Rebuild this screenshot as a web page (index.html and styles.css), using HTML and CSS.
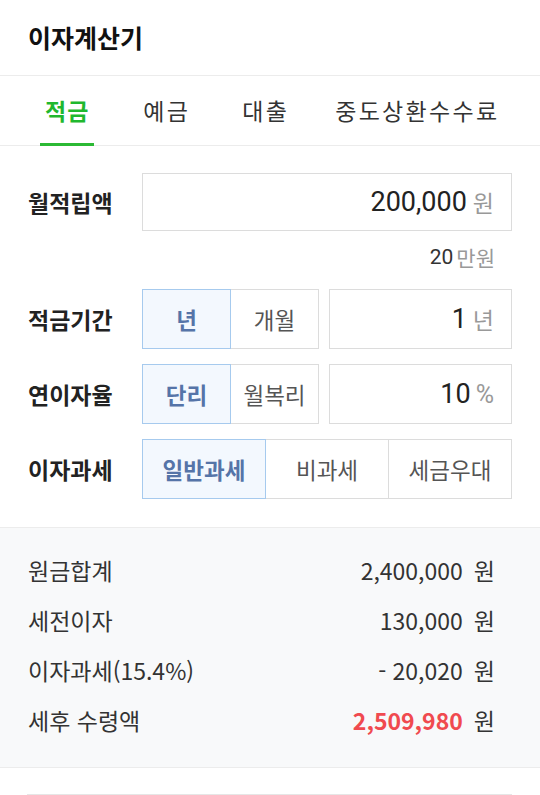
FILE: index.html
```html
<!DOCTYPE html>
<html lang="ko">
<head>
<meta charset="utf-8">
<link rel="stylesheet" href="styles.css">
</head>
<body>
<header class="header"><h1 class="title">이자계산기</h1></header>
<nav class="tabs">
  <a class="tab active">적금</a>
  <a class="tab">예금</a>
  <a class="tab">대출</a>
  <a class="tab">중도상환수수료</a>
</nav>
<section class="form">
  <div class="row">
    <div class="label">월적립액</div>
    <div class="field wide"><span class="num">200,000</span><span class="unit">원</span></div>
  </div>
  <div class="hint"><span class="hnum">20</span> <span class="hunit">만원</span></div>
  <div class="row">
    <div class="label">적금기간</div>
    <div class="seg two">
      <div class="opt on">년</div>
      <div class="opt">개월</div>
    </div>
    <div class="field"><span class="num">1</span><span class="unit">년</span></div>
  </div>
  <div class="row">
    <div class="label">연이자율</div>
    <div class="seg two">
      <div class="opt on">단리</div>
      <div class="opt">월복리</div>
    </div>
    <div class="field"><span class="num">10</span><span class="unit pct">%</span></div>
  </div>
  <div class="row">
    <div class="label">이자과세</div>
    <div class="seg three">
      <div class="opt on">일반과세</div>
      <div class="opt">비과세</div>
      <div class="opt">세금우대</div>
    </div>
  </div>
</section>
<section class="result">
  <div class="rrow"><span class="rlabel">원금합계</span><span class="rval">2,400,000</span><span class="runit">원</span></div>
  <div class="rrow"><span class="rlabel">세전이자</span><span class="rval">130,000</span><span class="runit">원</span></div>
  <div class="rrow"><span class="rlabel">이자과세(15.4%)</span><span class="rval">- 20,020</span><span class="runit">원</span></div>
  <div class="rrow"><span class="rlabel">세후 수령액</span><span class="rval red">2,509,980</span><span class="runit">원</span></div>
</section>
<div class="foot"><div class="footline"></div></div>
</body>
</html>
```
FILE: styles.css
```css
* { box-sizing: border-box; }
html, body { margin: 0; padding: 0; background: #fff; }
body {
  font-family: "Noto Sans CJK KR", "Noto Sans", sans-serif;
  color: #222;
  width: 540px;
  overflow: hidden;
}
.header {
  height: 76px;
  padding-left: 28px;
  display: flex;
  align-items: center;
  border-bottom: 1px solid #ececec;
}
.title {
  margin: 0;
  font-size: 25px;
  font-weight: 700;
  color: #111;
  position: relative;
  top: -1px;
}
.tabs {
  height: 70px;
  display: flex;
  align-items: stretch;
  padding-left: 40px;
  border-bottom: 1px solid #ececec;
  white-space: nowrap;
}
.tab {
  flex: none;
  display: flex;
  align-items: center;
  padding: 0 5px;
  font-size: 23px;
  letter-spacing: 2.3px;
  color: #333;
  margin-right: 44px;
  border-bottom: 3px solid transparent;
  margin-bottom: -1px;
  white-space: nowrap;
}
.tab:nth-child(2) { margin-right: 42px; }
.tab:nth-child(3) { margin-right: 36px; }
.tab:last-child { margin-right: 0; }
.tab.active {
  color: #1fb82e;
  font-weight: 700;
  letter-spacing: 1px;
  border-bottom-color: #2bb934;
}
.form {
  padding: 27px 28px 28px 28px;
}
.row {
  display: flex;
  align-items: center;
  height: 60px;
  margin-bottom: 15px;
}
.row:first-child { height: 58px; margin-bottom: 0; }
.row:last-child { margin-bottom: 0; }
.label {
  width: 114px;
  flex: none;
  font-size: 23px;
  font-weight: 700;
  color: #222;
}
.field {
  flex: 1;
  height: 100%;
  border: 1px solid #dcdcdc;
  display: flex;
  align-items: center;
  justify-content: flex-end;
  padding-right: 17px;
}
.num {
  font-family: Roboto, "Noto Sans", sans-serif;
  font-size: 27px;
  color: #222;
}
.unit {
  font-size: 23px;
  color: #999;
  margin-left: 6px;
}
.unit.pct { font-family: Roboto, sans-serif; font-size: 25px; margin-left: 5px; }
.hint {
  height: 58px;
  display: flex;
  align-items: center;
  justify-content: flex-end;
  padding-right: 17px;
  padding-bottom: 7px;
  font-size: 21px;
}
.hnum { font-family: Roboto, sans-serif; color: #333; }
.hunit { color: #999; margin-left: 3px; }
.seg {
  display: flex;
  height: 100%;
  flex: none;
}
.seg.two { width: 177px; margin-right: 10px; }
.seg.three { flex: 1; }
.opt {
  flex: 1;
  display: flex;
  align-items: center;
  justify-content: center;
  border: 1px solid #dcdcdc;
  margin-left: -1px;
  font-size: 22.5px;
  color: #555;
  background: #fff;
}
.opt:first-child { margin-left: 0; }
.opt.on {
  background: #f3f8fe;
  border-color: #a6caee;
  color: #5574a8;
  font-weight: 700;
  position: relative;
  z-index: 1;
}
.result {
  background: #f8f9fa;
  border-top: 1px solid #ececec;
  border-bottom: 1px solid #ececec;
  padding: 17px 28px 22px 28px;
}
.rrow {
  display: flex;
  align-items: center;
  height: 50px;
  font-size: 23px;
  color: #333;
}
.rlabel { flex: 1; color: #333; }
.rval { color: #333; }
.rval.red { color: #f04a4f; font-weight: 700; }
.runit { margin-left: 11px; margin-right: 17px; color: #333; }
.foot {
  padding: 26px 28px 0 27px;
}
.footline {
  height: 2px;
  background: #e6e6e6;
}
```
